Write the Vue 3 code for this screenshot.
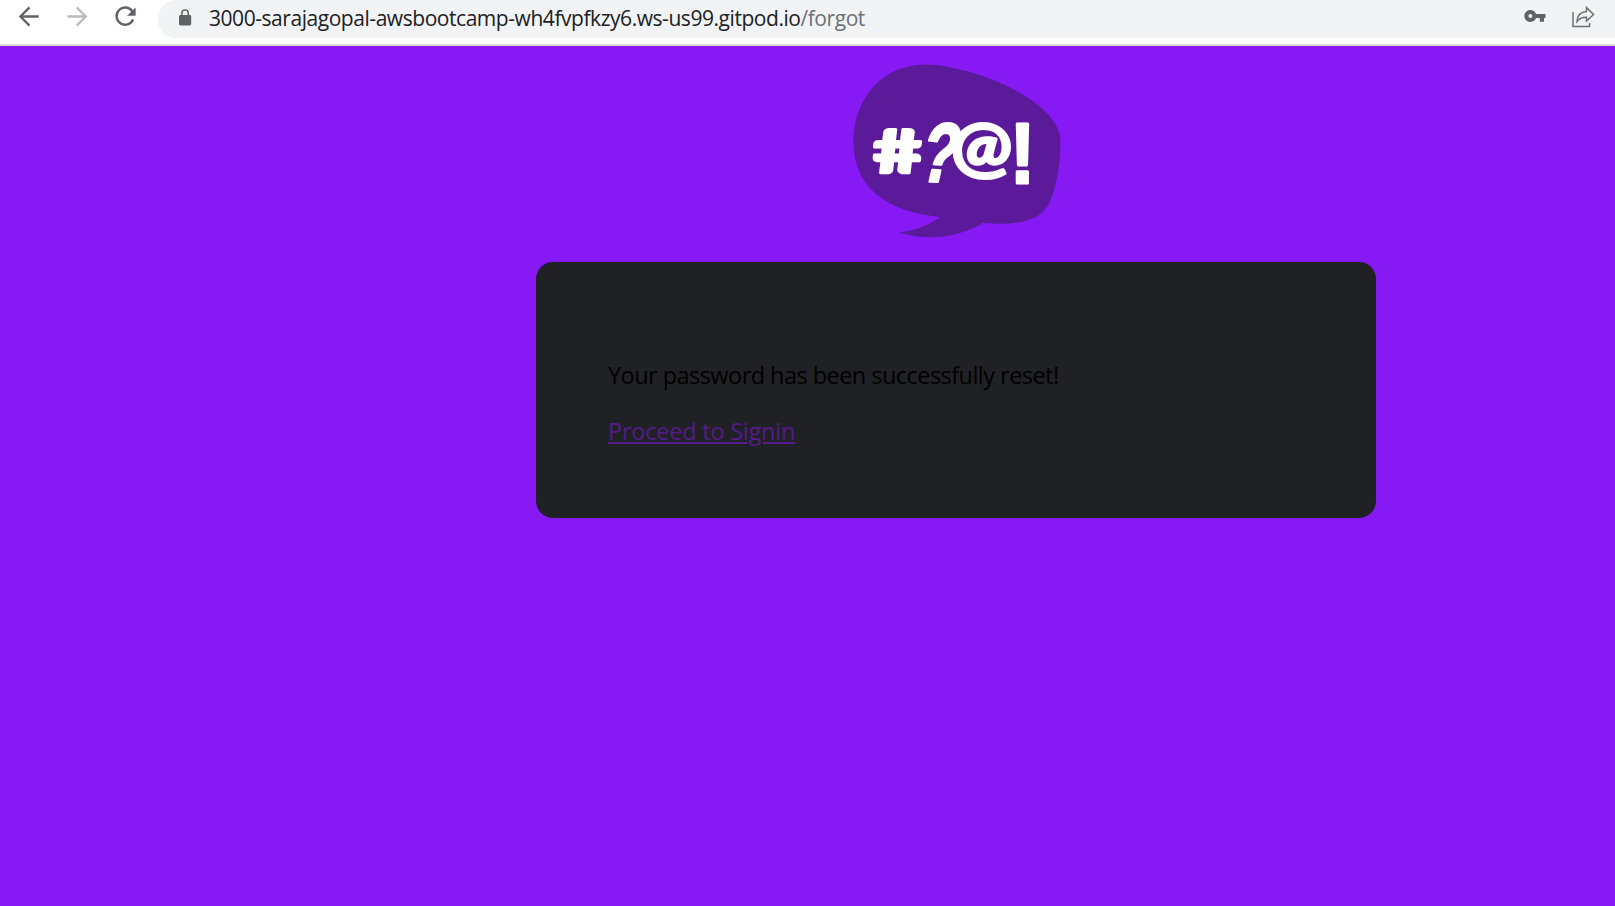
<script setup>
const host = '3000-sarajagopal-awsbootcamp-wh4fvpfkzy6.ws-us99.gitpod.io'
const path = '/forgot'
</script>

<template>
  <div class="window">
    <header class="toolbar">
      <nav class="nav">
        <svg class="icon" viewBox="0 0 32 34" fill="none" stroke="#5f6368" stroke-width="2.3"><path d="M22.8 16.5H4.7M13.5 7.4L4.4 16.5L13.5 25.6" /></svg>
        <svg class="icon" viewBox="0 0 32 34" fill="none" stroke="#babcbe" stroke-width="2.3"><path d="M3.5 16.5H21.6M12.7 7.4L21.8 16.5L12.7 25.6" /></svg>
        <svg class="icon" viewBox="0 0 32 34"><path d="M20.3 11.2A8.6 8.6 0 1 0 21.1 19.5" fill="none" stroke="#5f6368" stroke-width="2.4" /><path d="M23.6 7.400V15.700H15Z" fill="#5f6368" /></svg>
      </nav>
      <div class="address">
        <svg class="lock" viewBox="0 0 14 18"><rect x="1" y="6" width="12.2" height="10.4" rx="1.4" fill="#5f6368" /><path d="M3.9 7V4.2a3.2 3.2 0 0 1 6.4 0V7" fill="none" stroke="#5f6368" stroke-width="1.5" /></svg>
        <span class="url">{{ host }}<span class="path">{{ path }}</span></span>
        <svg class="key" viewBox="0 0 22 14"><path fill-rule="evenodd" fill="#5f6368" d="M6.400 1a6 6 0 0 1 5.600 4H21.500V9H20V12.700H15.800V9H12A6 6 0 1 1 6.400 1ZM6.400 5a2 2 0 1 0 0 4a2 2 0 0 0 0-4Z" /></svg>
        <svg class="share" viewBox="0 0 24 22" fill="none" stroke="#6b6f73" stroke-width="1.5"><path d="M2 6V20.500H18.500V17" /><path d="M6 15.500C6.300 9.500 9.500 6 15.500 5.500V1.500L22.500 8.500L15.500 15V11.300C11.300 11.200 8.400 12.400 6 15.500Z" /></svg>
      </div>
    </header>
    <main class="page">
      <div class="column">
        <svg class="logo" viewBox="840 50 240 200">
          <path fill="#5b1a99" d="M853.5 142C853.5 98 883 64.5 925 64.5C970 65 1050 96 1060 135C1061 148 1060 165 1056 182C1050 208 1044 228 983 223C954 240 922 240 899 232.500C917 230 929 225 940 217C890 212 853.500 190 853.500 142Z" />
          <g class="lettering">
            <text transform="translate(875.500 173) skewX(8) scale(1 .9)" textLength="50" lengthAdjust="spacingAndGlyphs" font-size="67">#</text>
            <text class="block" transform="translate(917 180.500) rotate(3) skewX(-10)" textLength="36" lengthAdjust="spacingAndGlyphs" font-size="84">?</text>
            <text class="at" transform="translate(950.500 170.500)" textLength="62" lengthAdjust="spacingAndGlyphs" font-size="68">@</text>
            <text class="block" transform="translate(1010 182.500)" textLength="25" lengthAdjust="spacingAndGlyphs" font-size="86">!</text>
          </g>
        </svg>
        <section class="card">
          <p class="message">Your password has been successfully reset!</p>
          <a class="link">Proceed to Signin</a>
        </section>
      </div>
    </main>
  </div>
</template>

<style>
body { margin: 0; overflow: hidden; }
</style>

<style scoped>
.window { width: 1615px; height: 906px; display: flex; flex-direction: column; overflow: hidden; font-family: "Open Sans", "Noto Sans", sans-serif; background: #8719f5; }
.toolbar { box-sizing: border-box; height: 46px; flex: none; display: flex; align-items: flex-start; background: #fff; border-bottom: 2px solid #dadadc; }
.nav { display: flex; gap: 16px; padding-left: 16px; width: 142px; flex: none; }
.icon { width: 32px; height: 34px; flex: none; }
.address { box-sizing: border-box; flex: 1; height: 38px; display: flex; align-items: center; padding: 0 20px 4px 20px; background: #f1f3f4; border-radius: 19px 0 0 19px / 21px 0 0 19px; }
.lock { width: 14px; height: 18px; margin-right: 17px; margin-top: 1px; }
.url { font-size: 21px; line-height: 34px; margin-top: 1px; letter-spacing: -0.45px; color: #202124; white-space: nowrap; }
.path { color: #6d7175; }
.key { width: 22px; height: 14px; margin-left: auto; margin-right: 25px; margin-bottom: 2px; }
.share { width: 24px; height: 22px; }
.page { flex: 1; display: flex; }
.column { width: 840px; margin-left: 536px; padding-top: 4px; }
.logo { display: block; width: 240px; height: 200px; margin-left: 304px; }
.lettering { fill: #fff; stroke: #fff; stroke-width: 3; stroke-linejoin: round; font-family: Lato, "Open Sans", sans-serif; font-weight: 900; }
.block { font-family: "Liberation Sans", sans-serif; font-weight: 700; }
.at { stroke-width: 2; }
.card { box-sizing: border-box; height: 256px; margin-top: 12px; padding: 97px 72px 0; background: #202124; border-radius: 17px; font-size: 23.5px; line-height: 32px; }
.message { margin: 0 0 24px; color: #000; letter-spacing: -0.54px; white-space: nowrap; }
.link { color: #551a8b; text-decoration: underline; text-decoration-thickness: 2px; text-underline-offset: 2px; letter-spacing: -0.22px; }
</style>
